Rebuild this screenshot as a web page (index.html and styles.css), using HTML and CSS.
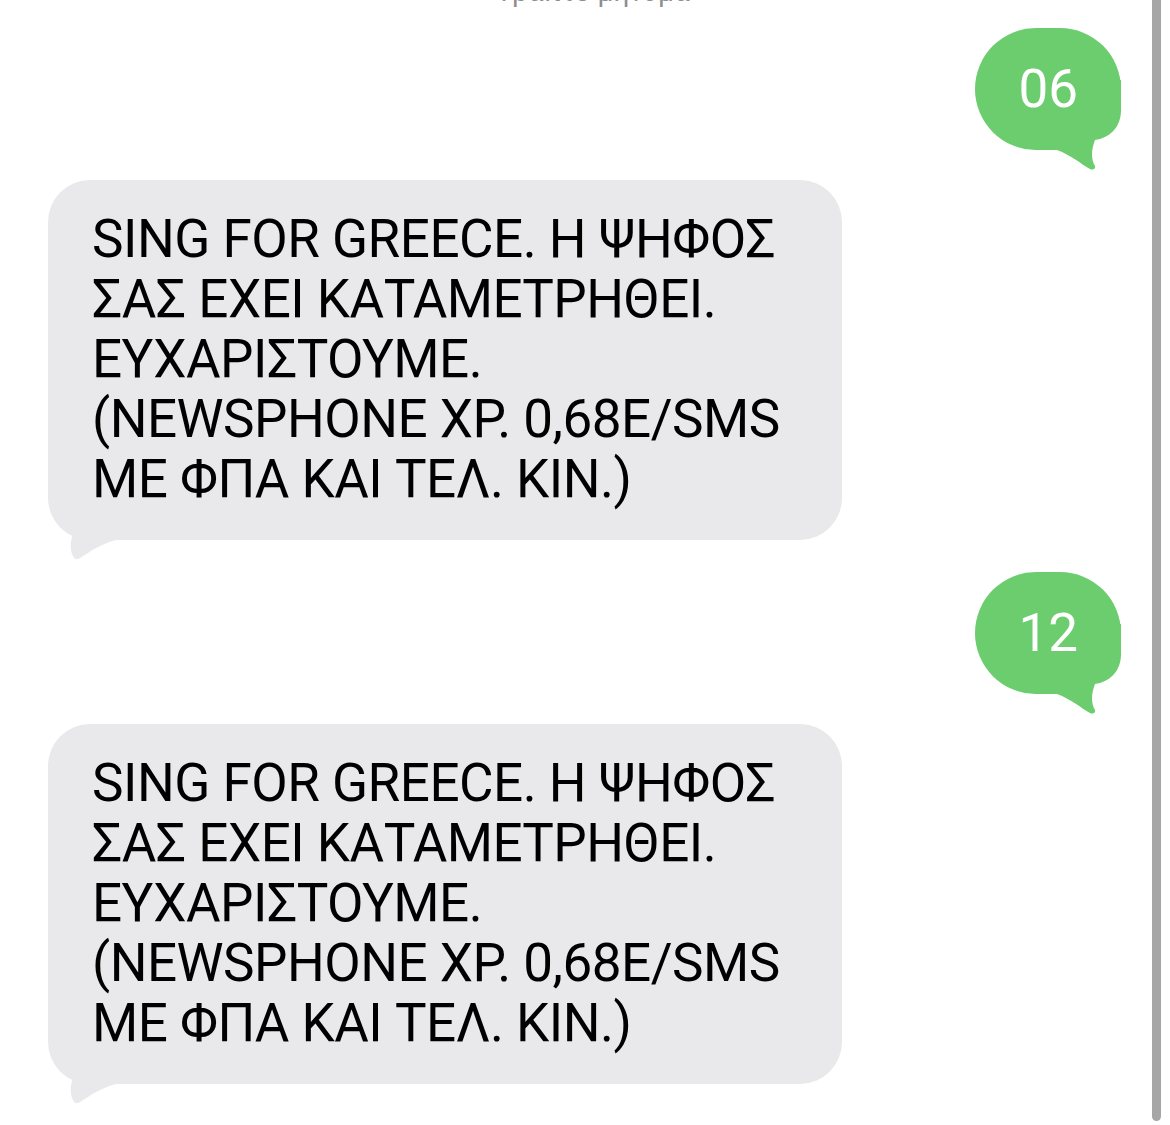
FILE: index.html
```html
<!DOCTYPE html>
<html lang="el">
<head>
<meta charset="utf-8">
<link rel="stylesheet" href="styles.css">
</head>
<body>
<div class="screen">
  <div class="header">Γραπτό μήνυμα</div>
  <div class="thread">
    <div class="row row-out">
      <div class="bubble out">06
        <svg class="tail tail-out" viewBox="-80 -70 80 90" width="80" height="90"><path d="M0,-70 L0,-40 C0,-22 -12,-12 -26,-10 C-30,0 -30,10 -26,16 C-25,19 -28,20.5 -31,19 C-40,14 -50,5 -64,0 L-64,-70 Z"/></svg>
      </div>
    </div>
    <div class="row row-in">
      <div class="bubble in">SING FOR GREECE. Η ΨΗΦΟΣ<br>ΣΑΣ ΕΧΕΙ ΚΑΤΑΜΕΤΡΗΘΕΙ.<br>ΕΥΧΑΡΙΣΤΟΥΜΕ.<br>(NEWSPHONE ΧΡ. 0,68E/SMS<br>ΜΕ ΦΠΑ ΚΑΙ ΤΕΛ. ΚΙΝ.)
        <svg class="tail tail-in" viewBox="0 -70 80 90" width="80" height="90"><path d="M1,-70 L1,-45 C1,-25 12,-10 25,-7 C22,3 22,11 25,16 C26,19 28,20 31,18.5 C42,12 52,4 68,0 L68,-70 Z"/></svg>
      </div>
    </div>
    <div class="row row-out">
      <div class="bubble out">12
        <svg class="tail tail-out" viewBox="-80 -70 80 90" width="80" height="90"><path d="M0,-70 L0,-40 C0,-22 -12,-12 -26,-10 C-30,0 -30,10 -26,16 C-25,19 -28,20.5 -31,19 C-40,14 -50,5 -64,0 L-64,-70 Z"/></svg>
      </div>
    </div>
    <div class="row row-in">
      <div class="bubble in">SING FOR GREECE. Η ΨΗΦΟΣ<br>ΣΑΣ ΕΧΕΙ ΚΑΤΑΜΕΤΡΗΘΕΙ.<br>ΕΥΧΑΡΙΣΤΟΥΜΕ.<br>(NEWSPHONE ΧΡ. 0,68E/SMS<br>ΜΕ ΦΠΑ ΚΑΙ ΤΕΛ. ΚΙΝ.)
        <svg class="tail tail-in" viewBox="0 -70 80 90" width="80" height="90"><path d="M1,-70 L1,-45 C1,-25 12,-10 25,-7 C22,3 22,11 25,16 C26,19 28,20 31,18.5 C42,12 52,4 68,0 L68,-70 Z"/></svg>
      </div>
    </div>
  </div>
  <div class="scrollbar"></div>
</div>
</body>
</html>
```

FILE: styles.css
```css
html, body {
  margin: 0;
  padding: 0;
  background: #ffffff;
}
.screen {
  position: relative;
  width: 1170px;
  height: 1125px;
  overflow: hidden;
  font-family: Roboto, Inter, "Noto Sans", "Liberation Sans", sans-serif;
}
.header {
  height: 30px;
  margin-top: -23px;
  overflow: hidden;
  text-align: center;
  color: #8e8e93;
  font-size: 28px;
  line-height: 30px;
  padding-left: 20px;
}
.thread {
  display: flex;
  flex-direction: column;
  padding: 21px 49px 0 48px;
}
.row {
  display: flex;
}
.row-out {
  justify-content: flex-end;
}
.row-in {
  justify-content: flex-start;
}
.bubble {
  position: relative;
  z-index: 0;
  box-sizing: border-box;
  white-space: nowrap;
}
.bubble.out {
  background: #6ccd6e;
  color: #ffffff;
  border-radius: 61px;
  min-width: 145px;
  height: 122px;
  padding: 0 43px;
  font-size: 53px;
  line-height: 122px;
  text-align: center;
}
.bubble.in {
  background: #e9e9eb;
  color: #000000;
  border-radius: 42px;
  width: 794px;
  height: 360px;
  padding: 29px 20px 0 44px;
  font-size: 53px;
  line-height: 60px;
  letter-spacing: -0.5px;
}
.row-out + .row-in {
  margin-top: 30px;
}
.row-in + .row-out {
  margin-top: 32px;
}
.tail {
  position: absolute;
  bottom: -20px;
  z-index: -1;
  overflow: visible;
}
.tail-out {
  right: 0;
  fill: #6ccd6e;
}
.tail-in {
  left: 0;
  fill: #e9e9eb;
}
.scrollbar {
  position: absolute;
  left: 1152px;
  top: -10px;
  width: 9px;
  height: 1131px;
  border-radius: 5px;
  background: #a6a6a6;
}
```
